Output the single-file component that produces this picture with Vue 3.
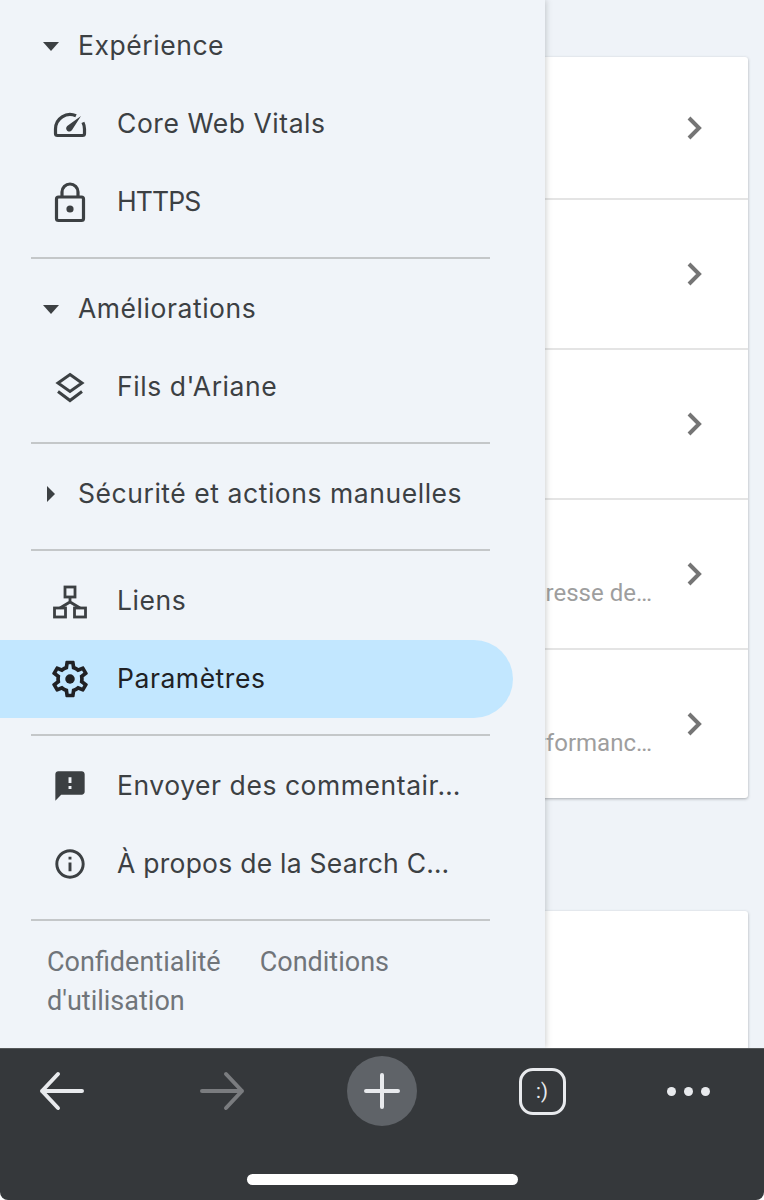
<script setup>
const rows = [
  { sub: '' },
  { sub: '' },
  { sub: '' },
  { sub: "Changement d'adresse de…" },
  { sub: 'Rapport de performanc…' },
]
</script>

<template>
  <div class="screen">
    <div class="stage">
      <main class="content">
        <section class="card">
          <div v-for="(row, i) in rows" :key="i" class="card-row">
            <span class="chevron-slot">
              <svg width="20" height="28" viewBox="0 0 20 28"><path d="M4 4l10 10L4 24" fill="none" stroke="#757575" stroke-width="4" /></svg>
            </span>
            <span v-if="row.sub" class="card-sub">{{ row.sub }}</span>
          </div>
        </section>
        <section class="card card-next"></section>
      </main>

      <aside class="drawer">
        <div class="nav-head">
          <span class="caret"><svg width="16" height="9" viewBox="0 0 16 9"><path d="M0 0h16L8 9z" /></svg></span>
          <span class="label">Expérience</span>
        </div>
        <div class="nav-item">
          <svg class="icon" width="44" height="44" viewBox="0 0 44 44">
            <path d="M28 13.8A14.5 14.5 0 0 0 7.5 27v4.5a2 2 0 0 0 2 2h25a2 2 0 0 0 2-2V27c0-2.4-.6-4.6-1.6-6.6" fill="none" stroke="#3c4043" stroke-width="3.2" />
            <path d="M33 14L24.2 27.8a3.2 3.2 0 1 1-5-3.8z" fill="#3c4043" />
          </svg>
          <span class="label">Core Web Vitals</span>
        </div>
        <div class="nav-item">
          <svg class="icon" width="44" height="44" viewBox="0 0 44 44">
            <rect x="8.5" y="17" width="27" height="23.5" rx="2" fill="none" stroke="#3c4043" stroke-width="3.2" />
            <path d="M14 17v-5a8 8 0 0 1 16 0v5" fill="none" stroke="#3c4043" stroke-width="3.2" />
            <circle cx="22" cy="29" r="3.6" fill="#3c4043" />
          </svg>
          <span class="label caps">HTTPS</span>
        </div>
        <hr class="rule" />

        <div class="nav-head">
          <span class="caret"><svg width="16" height="9" viewBox="0 0 16 9"><path d="M0 0h16L8 9z" /></svg></span>
          <span class="label">Améliorations</span>
        </div>
        <div class="nav-item">
          <svg class="icon" width="44" height="44" viewBox="0 0 44 44">
            <path d="M22 9.5L34 18 22 26.5 10 18z" fill="none" stroke="#3c4043" stroke-width="3" />
            <path d="M10 26.5L22 35.5 34 26.5" fill="none" stroke="#3c4043" stroke-width="3" />
          </svg>
          <span class="label">Fils d'Ariane</span>
        </div>
        <hr class="rule" />

        <div class="nav-head">
          <span class="caret"><svg width="8" height="16" viewBox="0 0 8 16"><path d="M0 0l8 8-8 8z" /></svg></span>
          <span class="label">Sécurité et actions manuelles</span>
        </div>
        <hr class="rule" />

        <div class="nav-item">
          <svg class="icon" width="44" height="44" viewBox="0 0 44 44">
            <g fill="none" stroke="#3c4043" stroke-width="2.8">
              <rect x="17" y="8" width="10" height="10" />
              <rect x="6.5" y="29" width="11" height="9" />
              <rect x="26.5" y="29" width="11" height="9" />
              <path d="M22 18v5M12 29l10-6 10 6" />
            </g>
          </svg>
          <span class="label">Liens</span>
        </div>
        <div class="nav-item active">
          <svg class="icon" width="44" height="44" viewBox="0 0 24 24" fill="#202124">
            <path d="M19.43 12.98c.04-.32.07-.64.07-.98 0-.34-.03-.66-.07-.98l2.11-1.65c.19-.15.24-.42.12-.64l-2-3.46c-.09-.16-.26-.25-.44-.25-.06 0-.12.01-.17.03l-2.49 1c-.52-.4-1.08-.73-1.69-.98l-.38-2.65C14.46 2.18 14.25 2 14 2h-4c-.25 0-.46.18-.49.42l-.38 2.65c-.61.25-1.17.59-1.69.98l-2.49-1c-.06-.02-.12-.03-.18-.03-.17 0-.34.09-.43.25l-2 3.46c-.13.22-.07.49.12.64l2.11 1.65c-.04.32-.07.65-.07.98 0 .33.03.66.07.98l-2.11 1.65c-.19.15-.24.42-.12.64l2 3.46c.09.16.26.25.44.25.06 0 .12-.01.17-.03l2.49-1c.52.4 1.08.73 1.69.98l.38 2.65c.03.24.24.42.49.42h4c.25 0 .46-.18.49-.42l.38-2.65c.61-.25 1.17-.59 1.69-.98l2.49 1c.06.02.12.03.18.03.17 0 .34-.09.43-.25l2-3.46c.12-.22.07-.49-.12-.64l-2.11-1.65zm-1.98-1.71c.04.31.05.52.05.73 0 .21-.02.43-.05.73l-.14 1.13.89.7 1.08.84-.7 1.21-1.27-.51-1.04-.42-.9.68c-.43.32-.84.56-1.25.73l-1.06.43-.16 1.13-.2 1.35h-1.4l-.19-1.35-.16-1.13-1.06-.43c-.43-.18-.83-.41-1.23-.71l-.91-.7-1.06.43-1.27.51-.7-1.21 1.08-.84.89-.7-.14-1.13c-.03-.31-.05-.54-.05-.74s.02-.43.05-.73l.14-1.13-.89-.7-1.08-.84.7-1.21 1.27.51 1.04.42.9-.68c.43-.32.84-.56 1.25-.73l1.06-.43.16-1.13.2-1.35h1.39l.19 1.35.16 1.13 1.06.43c.43.18.83.41 1.23.71l.91.7 1.06-.43 1.27-.51.7 1.21-1.07.85-.89.7.14 1.13z" />
            <circle cx="12" cy="12" r="2.6" />
          </svg>
          <span class="label">Paramètres</span>
        </div>
        <hr class="rule" />

        <div class="nav-item">
          <svg class="icon" width="44" height="44" viewBox="-3 -3 30 30" fill="#3c4043">
            <path d="M20 2H4c-1.1 0-1.99.9-1.99 2L2 22l4-4h14c1.1 0 2-.9 2-2V4c0-1.1-.9-2-2-2zm-7 12h-2v-2h2v2zm0-4h-2V6h2v4z" />
          </svg>
          <span class="label clip">Envoyer des commentair…</span>
        </div>
        <div class="nav-item">
          <svg class="icon" width="44" height="44" viewBox="-3 -3 30 30" fill="#3c4043">
            <path d="M11 7h2v2h-2zm0 4h2v6h-2zm1-9C6.48 2 2 6.48 2 12s4.48 10 10 10 10-4.48 10-10S17.52 2 12 2zm0 18c-4.41 0-8-3.59-8-8s3.59-8 8-8 8 3.59 8 8-3.59 8-8 8z" />
          </svg>
          <span class="label clip tight">À propos de la Search C…</span>
        </div>
        <hr class="rule" />

        <footer class="legal">
          <div class="legal-line"><span>Confidentialité</span><span>Conditions</span></div>
          <div>d'utilisation</div>
        </footer>
      </aside>
    </div>

    <nav class="toolbar">
      <div class="tools">
        <span class="tool tool-a">
          <svg width="48" height="40" viewBox="0 0 48 40" fill="none" stroke="#e8eaed" stroke-width="4" stroke-linecap="round" stroke-linejoin="round"><path d="M44 20H4M20 3L4 20l16 17" /></svg>
        </span>
        <span class="tool tool-b">
          <svg width="48" height="40" viewBox="0 0 48 40" fill="none" stroke="#7a7c7f" stroke-width="4" stroke-linecap="round" stroke-linejoin="round"><path d="M4 20h40M28 3l16 17-16 17" /></svg>
        </span>
        <span class="tool tool-a">
          <span class="new-tab">
            <svg width="38" height="38" viewBox="0 0 38 38" fill="none" stroke="#e8eaed" stroke-width="4" stroke-linecap="round"><path d="M19 3v32M3 19h32" /></svg>
          </span>
        </span>
        <span class="tool tool-b">
          <span class="tabs">:)</span>
        </span>
        <span class="tool tool-c">
          <span class="dots"><i></i><i></i><i></i></span>
        </span>
      </div>
      <div class="home-bar"></div>
    </nav>
  </div>
</template>

<style scoped>
.screen {
  width: 764px;
  height: 1200px;
  display: flex;
  flex-direction: column;
  overflow: hidden;
  background: #fff;
  font-family: Roboto, 'Liberation Sans', sans-serif;
}

.stage {
  flex: 1;
  min-height: 0;
  position: relative;
  overflow: hidden;
  background: #eff3f8;
}

.content {
  padding: 57px 16px 0 16px;
}

.card {
  background: #fff;
  border-radius: 3px;
  box-shadow: 0 1px 3px rgba(60, 64, 67, 0.4);
}

.card-next {
  height: 200px;
  margin-top: 113px;
}

.card-row {
  position: relative;
  height: 150px;
  border-bottom: 2px solid #e4e4e4;
  box-sizing: border-box;
}
.card-row:first-child { height: 143px; }
.card-row:last-child { height: 148px; border-bottom: none; }

.chevron-slot {
  position: absolute;
  right: 43px;
  top: 50%;
  margin-top: -14px;
  height: 28px;
}
.chevron-slot svg { display: block; }

.card-sub {
  position: absolute;
  right: 96px;
  top: 77px;
  font-size: 24px;
  line-height: 32px;
  color: #9e9e9e;
  white-space: nowrap;
}

.drawer {
  position: absolute;
  left: 0;
  top: 0;
  bottom: 0;
  width: 545px;
  box-sizing: border-box;
  padding-top: 7px;
  background: #f0f4f9;
  box-shadow: 1px 0 6px rgba(60, 64, 67, 0.25);
  color: #3c4043;
  font-family: Inter, Roboto, sans-serif;
  font-size: 26.5px;
  letter-spacing: 0.55px;
}

.nav-head,
.nav-item {
  height: 78px;
  display: flex;
  align-items: center;
}

.nav-head { padding-left: 43px; }

.label { margin-top: -2px; }
.caps { letter-spacing: -0.9px; }
.tight { letter-spacing: 0.25px; }

.caret {
  width: 16px;
  margin-right: 19px;
  display: flex;
  justify-content: center;
}
.caret svg { display: block; fill: #3c4043; }

.nav-item { padding-left: 48px; }
.nav-item .icon {
  flex-shrink: 0;
  margin-right: 25px;
}

.nav-item.active {
  width: 513px;
  box-sizing: border-box;
  background: #c2e7ff;
  border-radius: 0 39px 39px 0;
  color: #202124;
}

.clip { white-space: nowrap; }

.rule {
  height: 2px;
  border: 0;
  margin: 16px 55px 11px 31px;
  background: #c4c7c9;
}

.legal {
  padding: 11px 40px 0 47px;
  font-family: Roboto, sans-serif;
  font-size: 27px;
  line-height: 39px;
  letter-spacing: 0;
  color: #70757a;
}
.legal-line {
  display: flex;
  gap: 39px;
}

.toolbar {
  height: 152px;
  flex-shrink: 0;
  background: #35383b;
  border-radius: 0 0 8px 8px;
  border-top: 1px solid #55585a;
  box-sizing: border-box;
  display: flex;
  flex-direction: column;
}

.tools {
  display: flex;
  height: 84px;
}

.tool {
  display: flex;
  align-items: center;
  justify-content: center;
}
.tool-a { width: 124px; }
.tool-b { width: 196px; }
.tool-c { width: 96px; }

.new-tab {
  width: 70px;
  height: 70px;
  border-radius: 50%;
  background: #5f6368;
  display: flex;
  align-items: center;
  justify-content: center;
}
.new-tab svg { display: block; }

.tabs {
  width: 47px;
  height: 47px;
  box-sizing: border-box;
  border: 3.5px solid #e8eaed;
  border-radius: 14px;
  color: #e8eaed;
  font-size: 20px;
  display: flex;
  align-items: center;
  justify-content: center;
}

.dots {
  display: flex;
  gap: 8px;
}
.dots i {
  width: 9px;
  height: 9px;
  border-radius: 50%;
  background: #e8eaed;
}

.home-bar {
  width: 271px;
  height: 11px;
  margin: 41px auto 0;
  border-radius: 6px;
  background: #fff;
}
</style>
